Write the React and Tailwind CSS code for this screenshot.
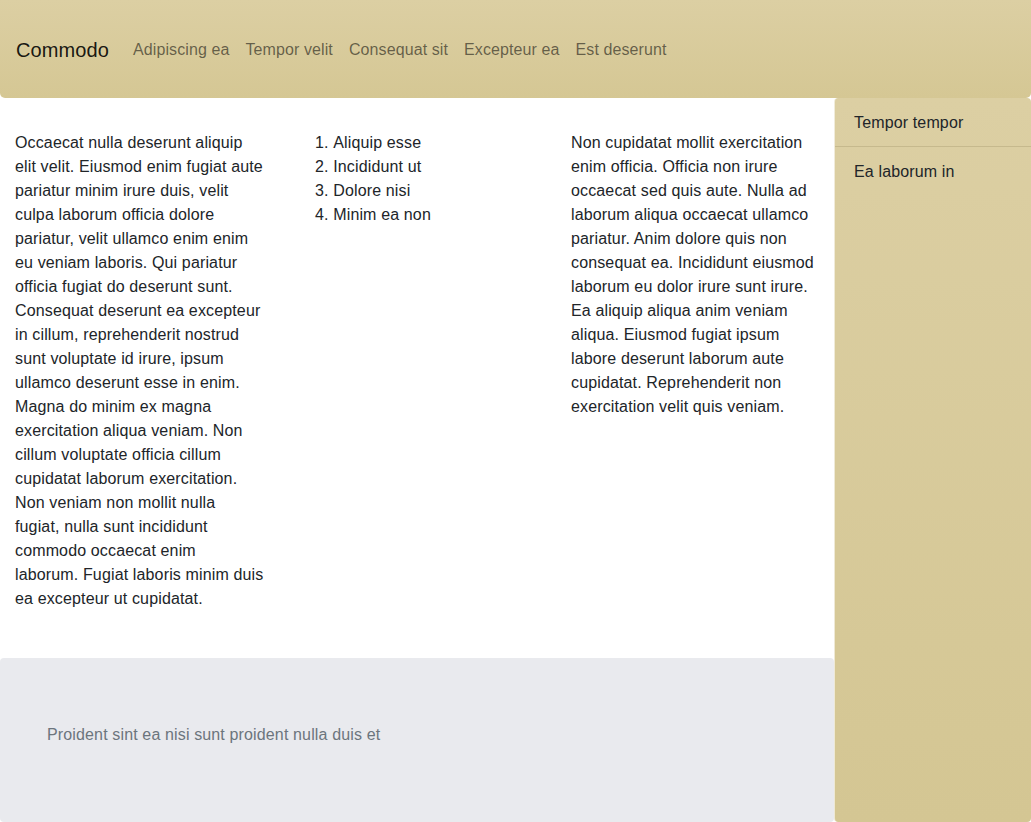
import React from "react";

const navLinks = ["Adipiscing ea", "Tempor velit", "Consequat sit", "Excepteur ea", "Est deserunt"];

const listItems = ["Aliquip esse", "Incididunt ut", "Dolore nisi", "Minim ea non"];

export default function App() {
  return (
    <div
      className="min-h-screen h-[822px] flex flex-col bg-white text-[#212529] text-base leading-6 tracking-[0.14px] overflow-hidden"
      style={{ fontFamily: '"Liberation Sans", Arial, sans-serif' }}
    >
      {/* header */}
      <header className="h-[98px] shrink-0 flex items-center px-4 pt-[2px] tracking-[0.1px] rounded-b-[5px] bg-gradient-to-b from-[#dccfa3] to-[#d5c794]">
        <a className="text-xl text-black/90 mr-4">Commodo</a>
        <nav className="flex">
          {navLinks.map((l) => (
            <a key={l} className="px-2 text-black/55">
              {l}
            </a>
          ))}
        </nav>
      </header>

      <div className="flex flex-1 min-h-0">
        {/* main */}
        <main className="flex-1 flex flex-col min-w-0">
          <div className="grid grid-cols-[300px_256px_1fr] pl-[15px] pr-[15px] pt-[33px] pb-[47px]">
            <p className="pr-[51.5px]">
              Occaecat nulla deserunt aliquip elit velit. Eiusmod enim fugiat aute pariatur minim irure duis, velit
              culpa laborum officia dolore pariatur, velit ullamco enim enim eu veniam laboris. Qui pariatur officia
              fugiat do deserunt sunt. Consequat deserunt ea excepteur in cillum, reprehenderit nostrud sunt voluptate
              id irure, ipsum ullamco deserunt esse in enim. Magna do minim ex magna exercitation aliqua veniam. Non
              cillum voluptate officia cillum cupidatat laborum exercitation. Non veniam non mollit nulla fugiat, nulla
              sunt incididunt commodo occaecat enim laborum. Fugiat laboris minim duis ea excepteur ut cupidatat.
            </p>
            <ol className="list-decimal list-inside">
              {listItems.map((i) => (
                <li key={i}>{i}</li>
              ))}
            </ol>
            <p>
              Non cupidatat mollit exercitation enim officia. Officia non irure occaecat sed quis aute. Nulla ad
              laborum aliqua occaecat ullamco pariatur. Anim dolore quis non consequat ea. Incididunt eiusmod laborum
              eu dolor irure sunt irure. Ea aliquip aliqua anim veniam aliqua. Eiusmod fugiat ipsum labore deserunt
              laborum aute cupidatat. Reprehenderit non exercitation velit quis veniam.
            </p>
          </div>

          <footer className="flex-1 bg-[#e9eaee] rounded-[4px] px-[47px] pt-[65px] text-[#6c757d]">
            Proident sint ea nisi sunt proident nulla duis et
          </footer>
        </main>

        {/* sidebar */}
        <aside className="w-[197px] shrink-0 rounded-[4px] border-l border-white/60 bg-gradient-to-b from-[#dccfa3] to-[#d4c693]">
          <div className="pl-[19px] pr-5 pt-[13px] pb-[11px] border-b border-[#c6b98d]">Tempor tempor</div>
          <div className="pl-[19px] pr-5 pt-[13px] pb-[11px]">Ea laborum in</div>
        </aside>
      </div>
    </div>
  );
}
